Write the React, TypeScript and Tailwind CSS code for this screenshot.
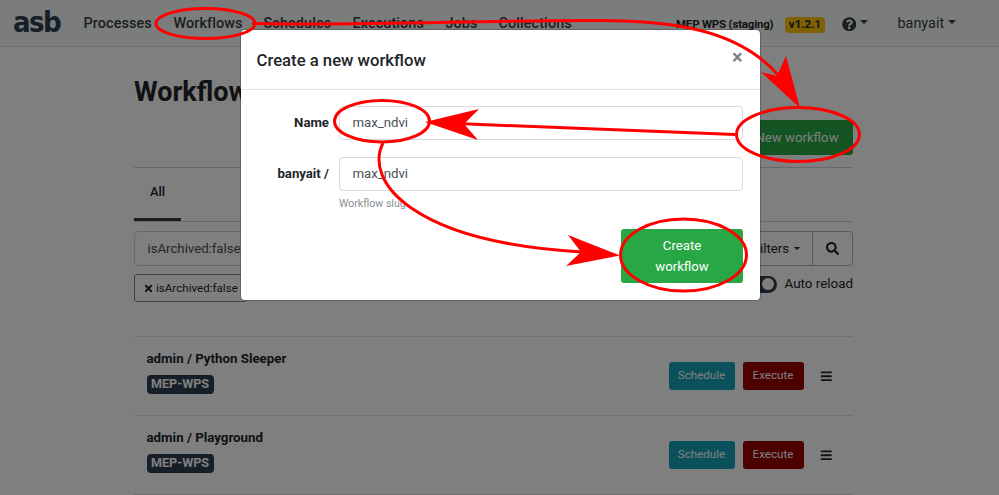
import { FaBars, FaQuestionCircle, FaSearch, FaTimes } from "react-icons/fa";

const navItems = [
  { label: "Processes", width: "w-[90px]" },
  { label: "Workflows", width: "w-[90px]" },
  { label: "Schedules", width: "w-[89px]" },
  { label: "Executions", width: "w-[93px]" },
  { label: "Jobs", width: "w-[53px]" },
  { label: "Collections", width: "w-[90px]" },
];

function Caret({ className = "" }: { className?: string }) {
  return (
    <span
      className={`inline-block h-0 w-0 border-x-4 border-t-4 border-x-transparent border-t-current ${className}`}
    />
  );
}

function NavBar() {
  return (
    <nav className="flex h-[47px] items-center border-b border-[#e3e6e7] bg-[#f7faf9] pt-px pl-[13px] text-[14.4px] text-[#373d43]">
      <span className="mb-[3px] w-[70.5px] text-[29px] leading-none font-bold tracking-[-1.6px] text-[#2c3e50] [font-family:'DejaVu_Sans_Condensed','DejaVu_Sans',sans-serif] [font-stretch:condensed]">
        asb
      </span>
      {navItems.map((item) => (
        <a key={item.label} className={`${item.width} shrink-0 font-medium tracking-[0.1px] whitespace-nowrap`}>
          {item.label}
        </a>
      ))}
      <span className="mt-[2px] ml-[87.5px] w-[109px] shrink-0 text-[11.5px] font-bold tracking-[-0.2px] whitespace-nowrap text-[#212529]">
        MEP WPS (staging)
      </span>
      <span className="mt-[2px] flex h-4 w-[40px] items-center justify-center rounded bg-[#ffc107] text-[11.5px] font-bold text-[#212529]">
        v1.2.1
      </span>
      <FaQuestionCircle className="mt-px ml-[16.5px] text-[14.5px]" />
      <Caret className="mb-1 ml-[3.5px]" />
      <span className="ml-[30px]">banyait</span>
      <Caret className="mb-[3px] ml-1" />
    </nav>
  );
}

function WorkflowRow({ name }: { name: string }) {
  return (
    <div className="flex h-[79px] items-center justify-between border-t border-[#dee2e6] pr-[21px] pl-[12.5px]">
      <div className="flex flex-col gap-[8px] pb-[7px]">
        <span className="text-[13.3px] leading-4 font-bold">{name}</span>
        <span className="flex h-[19px] w-[67px] items-center justify-center rounded bg-[#2c3e50] text-[12.6px] font-bold text-white">
          MEP-WPS
        </span>
      </div>
      <div className="flex items-center text-[11.6px] text-white">
        <span className="flex h-7 w-[66px] items-center justify-center rounded-[3px] bg-[#17a2b8]">Schedule</span>
        <span className="ml-2 flex h-7 w-[61px] items-center justify-center rounded-[3px] bg-[#990000]">Execute</span>
        <FaBars className="ml-[16px] text-[12.5px] text-[#212529]" />
      </div>
    </div>
  );
}

function WorkflowsPage() {
  return (
    <main className="ml-[134px] w-[719px]">
      <h1 className="pt-[28px] text-[27px] leading-[34px] font-bold">Workflows</h1>
      <div className="mt-[11px] flex h-[35px] justify-end">
        <button className="w-[112px] rounded-[3px] bg-[#28a745] text-[13.2px] text-white">New workflow</button>
      </div>
      <div className="mt-[12px] flex h-[55px] border-t border-b border-[#d0d2d4]">
        <div className="flex w-[47px] items-center justify-center border-b-3 border-[#343a40] pb-[2px] text-[13px] font-medium">
          All
        </div>
      </div>
      <div className="mt-[9px] flex h-[35px] text-[13.2px]">
        <div className="flex flex-1 items-center rounded-l border border-[#ced4da] pl-[12.5px] text-[#495057]">
          isArchived:false
        </div>
        <div className="flex w-[83px] items-center justify-end border border-l-0 border-[#b0b7bd] pr-[12px]">
          Filters <Caret className="mb-px ml-[5px] border-x-[3.5px] border-t-[3.5px]" />
        </div>
        <div className="flex w-[40px] items-center justify-center rounded-r border border-l-0 border-[#b0b7bd]">
          <FaSearch />
        </div>
      </div>
      <div className="mt-2 flex h-[28px] items-center justify-between">
        <div className="flex h-[28px] w-[113px] items-center rounded-[3px] border border-[#7c8a96] pt-px pl-[8px] text-[11.6px]">
          <FaTimes className="mr-[2px] text-[11px]" />
          isArchived:false
        </div>
        <div className="flex items-center pb-[7px] text-[13.4px]">
          <span className="mr-[8px] flex h-[17px] w-[29px] justify-end rounded-full bg-[#2c3e50] p-[2.5px]">
            <span className="h-3 w-3 rounded-full bg-white" />
          </span>
          Auto reload
        </div>
      </div>
      <div className="mt-[34px] border-b border-[#dee2e6]">
        <WorkflowRow name="admin / Python Sleeper" />
        <WorkflowRow name="admin / Playground" />
      </div>
    </main>
  );
}

function CreateDialog() {
  return (
    <section className="absolute top-[30px] left-[240.5px] h-[270px] w-[519px] rounded bg-white shadow-[0_0_0_1px_rgba(0,0,0,0.2)]">
      <header className="flex h-[59.5px] items-center justify-between border-b border-[#dee2e6] pr-[17px] pl-4">
        <h2 className="pt-[2px] text-[16.7px] font-medium">Create a new workflow</h2>
        <span className="pb-1 text-[20px] leading-none font-bold text-[#7f7f7f]">×</span>
      </header>
      <div className="pt-[16.5px] pr-[16.5px] text-[13.2px]">
        <div className="flex h-[34px] items-center">
          <label className="w-[98.5px] pr-[10px] text-right font-bold">Name</label>
          <div className="flex h-full flex-1 items-center rounded border border-[#d6dbe0] pl-[12.5px] text-[#495057]">
            max_ndvi
          </div>
        </div>
        <div className="mt-[17px] flex h-[34px] items-center">
          <label className="w-[98.5px] pr-[10px] text-right font-bold">banyait /</label>
          <div className="flex h-full flex-1 items-center rounded border border-[#d6dbe0] pl-[12.5px] text-[#495057]">
            max_ndvi
          </div>
        </div>
        <p className="mt-[5px] ml-[98.5px] text-[10.6px] leading-4 text-[#868e96]">Workflow slug</p>
        <button className="mt-[16.5px] ml-auto block h-[54px] w-[122px] rounded-[3px] bg-[#28a745] px-6 leading-[21px] text-white">
          Create workflow
        </button>
      </div>
    </section>
  );
}

function Annotations() {
  return (
    <svg className="absolute inset-0" width="999" height="495" fill="none" stroke="#ff0000" strokeWidth="3">
      <ellipse cx="205.5" cy="23.5" rx="49.5" ry="15" />
      <ellipse cx="382" cy="121.2" rx="47.5" ry="20.8" />
      <ellipse cx="798" cy="134.5" rx="61.5" ry="27" />
      <ellipse cx="683.5" cy="255" rx="63" ry="36" />
      <path d="M252 23.5C370 26 480 20 600 20.5C670 21 738 28 779 76" />
      <path d="M735 134.5L463 123.8" />
      <path d="M383 143C364 181 411 242 582 252" />
      <g fill="#ff0000" stroke="none">
        <path d="M800 108L761 72L777 76L786 56Z" />
        <path d="M425 122L479 109L464 124L478 140Z" />
        <path d="M620 255.5L568 235L581 252L566 266Z" />
      </g>
    </svg>
  );
}

export default function App() {
  return (
    <div className="relative h-[495px] w-[999px] overflow-hidden bg-white text-[#212529] [font-family:Roboto,sans-serif]">
      <NavBar />
      <WorkflowsPage />
      <div className="absolute inset-0 bg-black/50" />
      <CreateDialog />
      <Annotations />
    </div>
  );
}
